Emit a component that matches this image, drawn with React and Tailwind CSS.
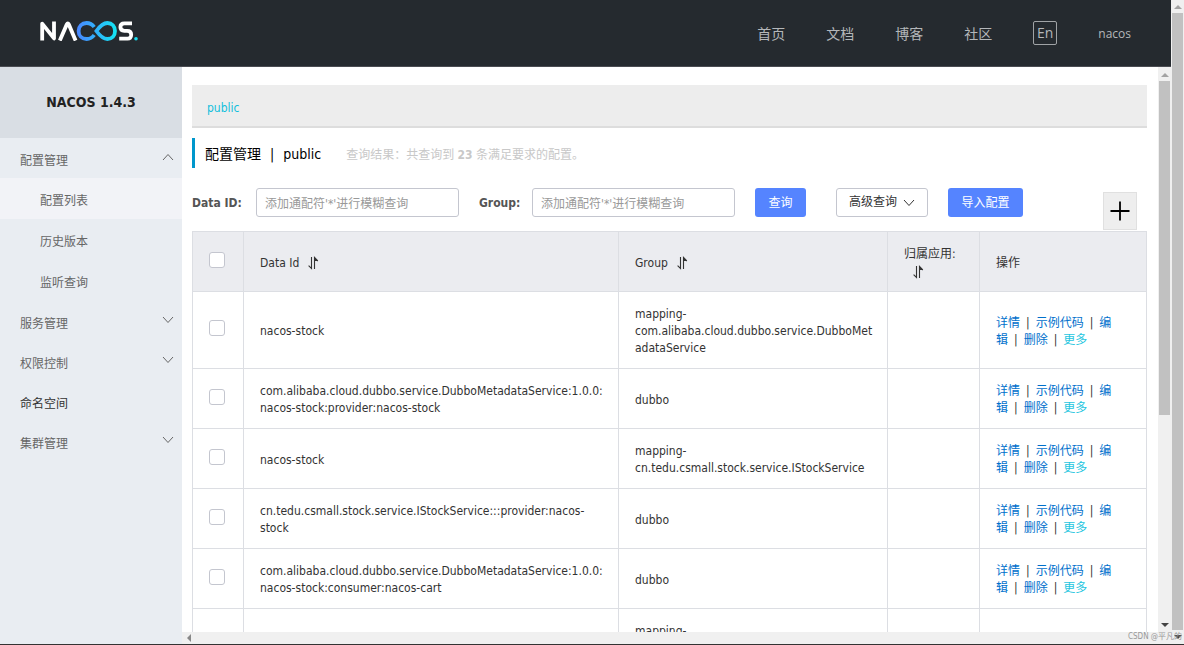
import React from "react";

const navItems = ["首页", "文档", "博客", "社区"];

const menu = [
  { label: "配置管理", open: true, children: ["配置列表", "历史版本", "监听查询"] },
  { label: "服务管理" },
  { label: "权限控制" },
  { label: "命名空间", leaf: true },
  { label: "集群管理" },
];

const rows = [
  { id: "nacos-stock", group: "mapping-com.alibaba.cloud.dubbo.service.DubboMetadataService" },
  { id: "com.alibaba.cloud.dubbo.service.DubboMetadataService:1.0.0:nacos-stock:provider:nacos-stock", group: "dubbo" },
  { id: "nacos-stock", group: "mapping-cn.tedu.csmall.stock.service.IStockService" },
  { id: "cn.tedu.csmall.stock.service.IStockService:::provider:nacos-stock", group: "dubbo" },
  { id: "com.alibaba.cloud.dubbo.service.DubboMetadataService:1.0.0:nacos-stock:consumer:nacos-cart", group: "dubbo" },
  { id: "nacos-cart", group: "mapping-com.alibaba.cloud.dubbo.service.DubboMetadataService" },
];

function Logo() {
  return (
    <svg viewBox="0 0 98 20" className="h-5 w-[98px]" fill="none" strokeWidth="3.8" aria-label="NACOS">
      <defs>
        <linearGradient id="loop" gradientUnits="userSpaceOnUse" x1="37" y1="0" x2="77" y2="0">
          <stop offset="0" stopColor="#4a86ff" />
          <stop offset="0.5" stopColor="#2fb4fb" />
          <stop offset="1" stopColor="#12e6f2" />
        </linearGradient>
      </defs>
      <path d="M2.2 19.6V2.6L14 17.4V0.4" stroke="#fff" strokeLinejoin="round" />
      <path d="M19.8 19.6L26.8 3.4Q27.8 1.4 28.8 3.4L35.6 19.6" stroke="#fff" />
      <path
        d="M54.2 14C52 17 49.5 18 46.6 18C41.8 18 38.6 14.6 38.6 10C38.6 5.4 41.8 2 46.6 2C49.5 2 52 3 54.2 6M56.4 10C60 5 63 2 67.4 2C72 2 75 5.4 75 10C75 14.6 72 18 67.4 18C63 18 60 15 56.4 10Z"
        stroke="url(#loop)"
      />
      <path d="M92 2.4H84.4Q80.4 2.4 80.4 6T84.4 9.8H87.2Q91.2 9.8 91.2 13.8T87.2 17.6H79.2" stroke="#fff" />
      <circle cx="96" cy="17.8" r="1.8" fill="#18dff2" />
    </svg>
  );
}

function Chevron({ up, className }) {
  return (
    <svg viewBox="0 0 12 8" className={className} fill="none" stroke="currentColor" aria-hidden="true">
      <path d={up ? "M1 7L6 1.5L11 7" : "M1 1L6 6.5L11 1"} />
    </svg>
  );
}

function SortIcon() {
  return (
    <svg viewBox="0 0 12 14" className="inline-block h-3.5 w-3 align-middle" fill="none" stroke="#333" strokeWidth="1.1" aria-hidden="true">
      <path d="M4.5 1V12.5L1.6 9.6M7.5 13V1.5L10.8 5" />
      <path d="M7.5 1.5V5L10.8 5Z" fill="#333" stroke="none" />
    </svg>
  );
}

function SortButton({ label }) {
  return (
    <button type="button" aria-label={label} className="ml-2">
      <SortIcon />
    </button>
  );
}

function Arrow({ dir, className }) {
  const paths = { up: "M0 5L4 1L8 5Z", down: "M0 1L4 5L8 1Z", left: "M5 0L1 4L5 8Z" };
  return (
    <svg viewBox={dir === "left" ? "0 0 6 8" : "0 0 8 6"} className={className} fill="currentColor" aria-hidden="true">
      <path d={paths[dir]} />
    </svg>
  );
}

function Check({ label }) {
  return (
    <input
      type="checkbox"
      aria-label={label}
      className="block size-4 appearance-none rounded-[3px] border border-[#c4c6cf] bg-white"
    />
  );
}

function Sep() {
  return <span className="mx-1.5 text-[#333]">|</span>;
}

const inputClass =
  "h-[29px] w-[203px] rounded-[3px] border border-[#c4c6cf] bg-white px-2 pt-0.5 text-[12px] text-[#333] placeholder:text-[#999] outline-none";
const primaryClass = "h-[29px] rounded-[3px] bg-[#5584ff] pt-0.5 text-[12px] text-white";
const cell = "border border-[#dcdee3] pt-[14px] pb-[11px] pl-4 pr-3";
const checkCell = "border border-[#dcdee3] pt-2.5 pb-[14px] pl-4 pr-3";

export default function App() {
  return (
    <div className="flex h-screen overflow-hidden border-b border-[#333] bg-white font-['DejaVu_Sans_Condensed','Noto_Sans_CJK_SC',sans-serif] text-[12px] leading-[17px] text-[#333]">
      <div className="flex min-w-0 flex-1 flex-col">
        <header className="flex h-[67px] shrink-0 items-center border-b border-[#4a4c52] bg-[#252a2f] px-10">
          <a href="#home" className="-mt-1">
            <Logo />
          </a>
          <nav className="ml-auto flex items-center gap-[41px] text-[14px] text-[#b4b7ba]">
            {navItems.map((n) => (
              <a key={n} href={"#" + n} className="pt-0.5">
                {n}
              </a>
            ))}
            <button type="button" className="h-6 w-6 rounded-[2px] border border-[#a0a3a6] font-['Open_Sans',sans-serif] leading-5">
              En
            </button>
            <a href="#user" className="font-['Open_Sans',sans-serif] text-[12px]">
              nacos
            </a>
          </nav>
        </header>

        <div className="flex min-h-0 flex-1">
          <aside className="w-[182px] shrink-0 bg-[#e9edf2] text-[#666]">
            <h1 className="flex h-[71px] items-center justify-center bg-[#d9dee4] text-[14px] font-bold text-[#222]">
              NACOS 1.4.3
            </h1>
            <ul>
              {menu.map((m) => (
                <li key={m.label}>
                  <a
                    href={"#" + m.label}
                    className={
                      m.leaf
                        ? "flex h-10 items-center justify-between pl-5 pr-2 pt-1.5 text-[#333]"
                        : "flex h-10 items-center justify-between pl-5 pr-2 pt-1.5"
                    }
                  >
                    {m.label}
                    {!m.leaf && <Chevron up={m.open} className="mb-2 h-2 w-3" />}
                  </a>
                  {m.children && (
                    <ul>
                      {m.children.map((c, i) => (
                        <li key={c}>
                          <a
                            href={"#" + c}
                            className={
                              i === 0
                                ? "flex h-[41px] items-center bg-[#f2f3f7] pl-10 pt-1.5"
                                : "flex h-[41px] items-center pl-10 pt-1.5"
                            }
                          >
                            {c}
                          </a>
                        </li>
                      ))}
                    </ul>
                  )}
                </li>
              ))}
            </ul>
          </aside>

          <div className="flex min-w-0 flex-1 flex-col">
            <div className="flex min-h-0 flex-1">
              <main className="min-w-0 flex-1 overflow-hidden pl-2.5 pr-[11px] pt-[18px]">
                <div className="flex h-[43px] items-center border-b-2 border-[#ddd] bg-[#ededed] pl-[15px] pt-1.5 text-[#12bfdc]">
                  <a href="#public">public</a>
                </div>

                <div className="mt-2.5 flex h-[30px] items-center border-l-[3px] border-[#0097cc] pl-2.5 pt-0.5">
                  <h2 className="text-[14px] text-black">
                    配置管理<span className="mx-[9px]">|</span>public
                  </h2>
                  <p className="ml-[25px] pt-0.5 text-[#c8c8c8]">
                    查询结果：共查询到 <b>23</b> 条满足要求的配置。
                  </p>
                </div>

                <form className="mt-5 flex h-[43px] items-start">
                  <label htmlFor="dataId" className="w-16 pt-[7px] font-bold text-[#555]">
                    Data ID:
                  </label>
                  <input id="dataId" placeholder="添加通配符'*'进行模糊查询" className={inputClass} />
                  <label htmlFor="group" className="ml-5 w-[53px] pt-[7px] font-bold text-[#555]">
                    Group:
                  </label>
                  <input id="group" placeholder="添加通配符'*'进行模糊查询" className={inputClass} />
                  <button type="button" className={primaryClass + " ml-5 w-[51px]"}>
                    查询
                  </button>
                  <button
                    type="button"
                    className="ml-[30px] flex h-[29px] w-[92px] items-center justify-center gap-1.5 rounded-[3px] border border-[#c4c6cf] text-[12px]"
                  >
                    高级查询
                    <Chevron className="h-2 w-3" />
                  </button>
                  <button type="button" className={primaryClass + " ml-5 w-[75px]"}>
                    导入配置
                  </button>
                  <button
                    type="button"
                    aria-label="新建配置"
                    className="ml-auto mr-2.5 mt-1 flex h-[38px] w-[34px] items-center justify-center border border-[#e0e0e0] bg-[#eee] text-black"
                  >
                    <svg viewBox="0 0 20 20" className="size-5" stroke="currentColor" strokeWidth="1.8" aria-hidden="true">
                      <path d="M10 0.5V19.5M0.5 10H19.5" />
                    </svg>
                  </button>
                </form>

                <table className="w-full table-fixed border-collapse break-words">
                  <colgroup>
                    <col className="w-[51px]" />
                    <col />
                    <col className="w-[269px]" />
                    <col className="w-[92px]" />
                    <col className="w-[167px]" />
                  </colgroup>
                  <thead>
                    <tr className="bg-[#ebecf0] text-left">
                      <th className={checkCell}>
                        <Check label="全选" />
                      </th>
                      <th className={cell + " font-normal"}>
                        Data Id
                        <SortButton label="按 Data Id 排序" />
                      </th>
                      <th className={cell + " font-normal"}>
                        Group
                        <SortButton label="按 Group 排序" />
                      </th>
                      <th className={cell + " font-normal"}>
                        归属应用:
                        <SortButton label="按归属应用排序" />
                      </th>
                      <th className={cell + " font-normal"}>操作</th>
                    </tr>
                  </thead>
                  <tbody>
                    {rows.map((r, i) => (
                      <tr key={i}>
                        <td className={checkCell}>
                          <Check label={"选择 " + r.id} />
                        </td>
                        <td className={cell}>{r.id}</td>
                        <td className={cell}>{r.group}</td>
                        <td className={cell} />
                        <td className={cell}>
                          <div className="pr-3 text-[#0070cc]">
                            <a href="#detail">详情</a>
                            <Sep />
                            <a href="#code">示例代码</a>
                            <Sep />
                            <a href="#edit">编辑</a>
                            <Sep />
                            <a href="#delete">删除</a>
                            <Sep />
                            <a href="#more" className="text-[#26c6e0]">
                              更多
                            </a>
                          </div>
                        </td>
                      </tr>
                    ))}
                  </tbody>
                </table>
              </main>

              <div className="flex w-[13px] shrink-0 flex-col items-center bg-[#f0f0f0] pt-[5px] pb-1">
                <Arrow dir="up" className="mb-[3px] h-1.5 w-2 shrink-0 text-[#a3a3a3]" />
                <div className="h-3/5 w-[11px] bg-[#c1c1c1]" />
                <Arrow dir="down" className="mt-auto h-1.5 w-2 shrink-0 text-[#444]" />
              </div>
            </div>
            <div className="flex h-3 shrink-0 items-center bg-[#f0f0f0] pl-1">
              <Arrow dir="left" className="h-2 w-1.5 text-[#888]" />
            </div>
          </div>
        </div>
      </div>

      <div className="relative flex w-[13px] shrink-0 flex-col items-center bg-[#f0f0f0] pt-1 pb-1">
        <Arrow dir="up" className="mb-[3px] h-1.5 w-2 shrink-0 text-[#a3a3a3]" />
        <div className="w-[11px] flex-1 bg-[#c1c1c1]" />
        <Arrow dir="down" className="mt-1 h-1.5 w-2 shrink-0 text-[#444]" />
        <span className="absolute right-0.5 bottom-0 whitespace-nowrap text-[8px] leading-[14px] text-[#999]">CSDN @平凡的</span>
      </div>
    </div>
  );
}
